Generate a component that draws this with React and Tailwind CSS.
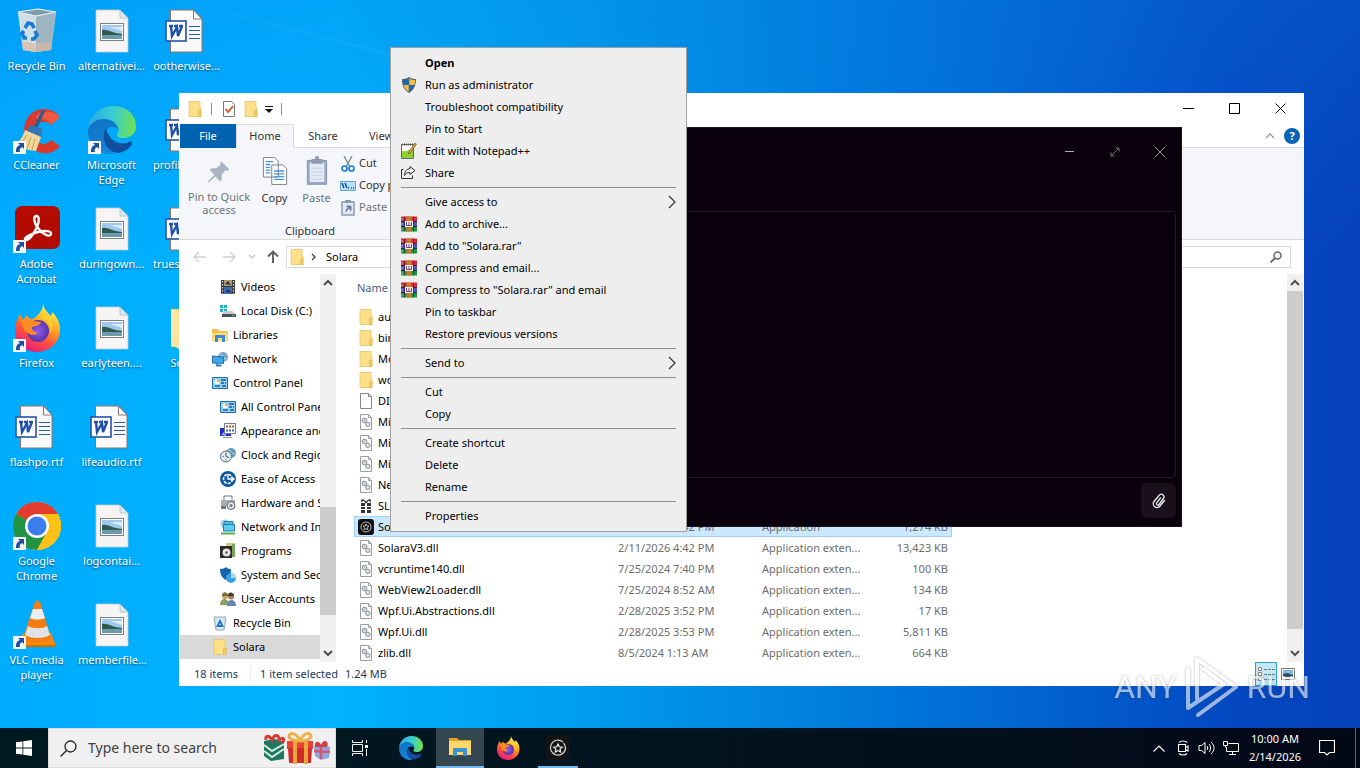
import React, { useState } from 'react';

const ShortcutArrow = () => (
  <g>
    <rect x="0" y="35" width="13" height="13" fill="#f4f6f8" />
    <path d="M3 46c0-4 1-6 4-7l-2-2h6v6l-2-2c-2 1-3 3-2 5z" fill="#1f4e9c" />
  </g>
);

const RecycleBinIcon = () => (
  <svg viewBox="0 0 48 48" className="size-12">
    <path d="M5 5l20-3 18 3-5 38-15 2-13-2z" fill="#c3d5df" />
    <path d="M5 5l18 4v36l-13-2z" fill="#cfdfe8" />
    <path d="M23 9l20-4-5 38-15 2z" fill="#9db4c1" />
    <path d="M5 5l20-3 18 3-20 4z" fill="#7f9aaa" stroke="#edf3f6" strokeWidth="1.2" />
    <path d="M9 34l14 3 16-3-1 9-15 2-13-2z" fill="#dbb9a0" opacity=".7" />
    <g fill="none" stroke="#1879d0" strokeWidth="3.6">
      <path d="M12 21l3-5 4 1 2 4" />
      <path d="M22 24l2 4-3 4h-3" />
      <path d="M14 31h-3l-2-5 2-2" />
    </g>
  </svg>
);

const CCleanerIcon = () => (
  <svg viewBox="0 0 48 48" className="size-12">
    <path d="M47 11l-9 8c-4-5-12-4-15 2-4 7 0 16 7 17 4 0 6-2 8-4l9 6c-6 8-16 9-24 5C12 40 8 24 14 13 20 1 38-1 47 11z" fill="#d9382a" />
    <path d="M47 11c-7-7-18-7-24-1l2 5c6-4 10-1 13 4z" fill="#ef5a41" />
    <path d="M29 4l3 1-8 18-4-1z" fill="#2f5c93" />
    <path d="M17 19l13 4-2 9-15-6z" fill="#3478b8" />
    <path d="M12 24l16 7-5 14-8-1-14-6c7-3 9-8 11-14z" fill="#f2d79a" />
    <path d="M14 29l-7 10m11-8l-4 12m8-10l-3 11" stroke="#c99a51" />
    <ShortcutArrow />
  </svg>
);

const AcrobatIcon = () => (
  <svg viewBox="0 0 48 48" className="size-12">
    <rect x="2" y="1" width="45" height="43" rx="7" fill="#b30b00" />
    <path d="M23 11c3-1 4 5 1 11-3 7-8 13-11 13-4-1 4-6 12-8 7-2 14-1 13 2-1 4-9 0-13-6-4-5-5-11-2-12z" fill="none" stroke="#fff" strokeWidth="2.4" />
    <ShortcutArrow />
  </svg>
);

const FirefoxArt = ({ id }) => (
  <>
    <defs>
      <linearGradient id={`${id}f`} x1=".75" y1=".05" x2=".25" y2="1">
        <stop offset="0" stopColor="#fff44f" />
        <stop offset=".35" stopColor="#ffa520" />
        <stop offset=".65" stopColor="#ff4f3d" />
        <stop offset="1" stopColor="#e31587" />
      </linearGradient>
      <radialGradient id={`${id}p`}>
        <stop offset="0" stopColor="#8a5cf5" />
        <stop offset="1" stopColor="#5b32a5" />
      </radialGradient>
    </defs>
    <path d="M30 0c1 5 4 8 8 12 1-2 1-3 1-4 8 7 10 18 6 27-4 8-12 13-21 13C10 48 1 37 2 25c0-6 3-11 5-15l3 6 4-5c1 2 2 4 6 4 5-4 10-8 10-15z" fill={`url(#${id}f)`} />
    <circle cx="25" cy="27" r="11" fill={`url(#${id}p)`} />
    <path d="M7 16c4-2 8 0 12 1l9 1c-1 4-6 4-9 5-1 3 3 5 6 6-5 4-13 1-15-6-1-3-1-5-3-7z" fill="#ff8b22" />
    <path d="M23 15c10-3 17 6 14 16 5-9 2-18-5-23-1 4-5 6-9 7z" fill="#ffd02f" />
  </>
);

const FirefoxIcon = () => (
  <svg viewBox="0 0 48 48" className="size-12">
    <FirefoxArt id="desk" />
    <ShortcutArrow />
  </svg>
);

const EdgeArt = ({ id }) => (
  <>
    <defs>
      <linearGradient id={`${id}a`} x1="0" y1=".4" x2="1" y2=".5">
        <stop offset="0" stopColor="#2aa9e8" />
        <stop offset=".5" stopColor="#38cdd0" />
        <stop offset="1" stopColor="#71e24e" />
      </linearGradient>
      <linearGradient id={`${id}b`} x1="0" y1="0" x2=".4" y2="1">
        <stop offset="0" stopColor="#0f6fc0" />
        <stop offset="1" stopColor="#1585dc" />
      </linearGradient>
    </defs>
    <path d="M0 24C1 10 11 0 25 0c14 0 23 9 23 20 0 8-6 12-13 12-5 0-7-2-6-4 2-2 2-4 1-7-2-5-8-8-14-8C8 13 3 17 0 24z" fill={`url(#${id}a)`} />
    <path d="M0 24c2-7 8-11 16-11 7 0 13 4 14 10-3-3-8-3-11 0-6 6-4 17 8 25-15 2-28-9-27-24z" fill={`url(#${id}b)`} />
    <path d="M18 22c-6 10 0 24 12 25 7-1 12-5 14-9 1-2-1-3-3-2-6 3-15 1-19-5-2-3-4-6-4-9z" fill="#104f9e" />
  </>
);

const EdgeIcon = () => (
  <svg viewBox="0 0 48 48" className="size-12">
    <EdgeArt id="desk-edge" />
    <ShortcutArrow />
  </svg>
);

const ChromeIcon = () => (
  <svg viewBox="0 0 48 48" className="size-12">
    <circle cx="24" cy="24" r="24" fill="#fbc116" />
    <path d="M24 24L3.200 12A24 24 0 0 1 44.800 12z" fill="#e33b2e" />
    <path d="M3.200 12A24 24 0 0 0 24 48l10-18-10-6z" fill="#229342" />
    <path d="M24 12h21a24 24 0 0 1-21 36l10-18z" fill="#fbc116" />
    <circle cx="24" cy="24" r="12" fill="#fff" />
    <circle cx="24" cy="24" r="9.500" fill="#3b7ded" />
    <ShortcutArrow />
  </svg>
);

const VlcIcon = () => (
  <svg viewBox="0 0 48 48" className="size-12">
    <path d="M10 32h28l5 13H6z" fill="#f58a0b" />
    <path d="M6 44h37v2H6z" fill="#d96a00" />
    <path d="M22 1c1-2 4-2 5 0l11 36c-5 6-23 6-28 0z" fill="#f47d11" />
    <path d="M20 8h9l3 9c-4 2-11 2-15 0z" fill="#eceff1" />
    <path d="M15 25c4 3 15 3 19 0l3 9c-6 4-19 4-25 0z" fill="#dfe3e6" />
    <ShortcutArrow />
  </svg>
);

const WordFileIcon = () => (
  <svg viewBox="0 0 48 48" className="size-12">
    <path d="M7.500 3h23l8.500 9v33H7.500z" fill="#fafafa" stroke="#8c7568" />
    <path d="M30.500 3v9H39z" fill="#fff" stroke="#8c7568" />
    <path d="M26 19.500h11M26 23.500h11M26 27.500h11M26 31.500h11" stroke="#2a5cb0" />
    <rect x="3" y="14" width="20" height="20" fill="#fff" stroke="#2453a6" strokeWidth="1.600" />
    <path d="M6 19h4m1 0h4m1 0h4M8 19l1 10 5-9 1 9 4-10" fill="none" stroke="#1f4fa8" strokeWidth="2.400" />
  </svg>
);

const PictureFileIcon = () => (
  <svg viewBox="0 0 48 48" className="size-12">
    <path d="M8 3h24l8 8v34H8z" fill="#f6f5f3" stroke="#c4c7c9" strokeWidth=".8" />
    <path d="M32 3v8h8z" fill="#d8ebf5" stroke="#b4bcc1" strokeWidth=".8" />
    <rect x="12.500" y="16.500" width="23" height="17" fill="#fff" stroke="#77808a" />
    <path d="M14 18h20v14H14z" fill="#9fc8ee" />
    <path d="M14 23c6-1 9 3 20 4v2H14z" fill="#2f5b4f" />
    <path d="M14 28h20v4H14z" fill="#6d9aad" />
    <path d="M22 20h12v4z" fill="#dcecf8" />
  </svg>
);

const DesktopFolderIcon = () => (
  <svg viewBox="0 0 48 48" className="size-12">
    <path d="M8 5h30v38H8z" fill="#ffd36b" />
    <path d="M8 5l8 3v37l-8-5z" fill="#ffe6a3" />
  </svg>
);

const FolderIcon = () => (
  <svg viewBox="0 0 16 16" className="size-4 shrink-0">
    <path d="M2 .5h11v6.500h1v8.500H2z" fill="#ffe08a" stroke="#e5bd56" strokeWidth=".7" />
    <path d="M11.500 9.500H14v6h-2.500z" fill="#f7cd62" stroke="#dfb044" strokeWidth=".6" />
  </svg>
);

const BlankFileIcon = () => (
  <svg viewBox="0 0 16 16" className="size-4 shrink-0">
    <path d="M2.500.5h8l3 3v12h-11z" fill="#fff" stroke="#84888b" />
    <path d="M10.500.5v3h3" fill="none" stroke="#84888b" />
  </svg>
);

const DllIcon = () => (
  <svg viewBox="0 0 16 16" className="size-4 shrink-0">
    <path d="M2.500.5h8l3 3v12h-11z" fill="#fcfcfc" stroke="#9a9ea1" />
    <path d="M10.500.5v3h3" fill="none" stroke="#9a9ea1" />
    <circle cx="6.500" cy="6.500" r="2.200" fill="#eee" stroke="#9aa0a4" strokeWidth="1.200" />
    <circle cx="6.500" cy="6.500" r=".6" fill="#858a8e" />
    <circle cx="9.800" cy="10.300" r="2" fill="#eee" stroke="#9aa0a4" strokeWidth="1.200" />
  </svg>
);

const GiftIcon = () => (
  <svg viewBox="0 0 16 16" className="size-4 shrink-0">
    <path d="M3 5h4v3H3zM9 5h4v3H9zM3 9h4v2H3zM9 9h4v2H9zM3 12h4v3H3zM9 12h4v3H9z" fill="#333" />
    <path d="M8 5C6 1 3 1 4 4M8 5c2-4 5-4 4-1" fill="none" stroke="#333" strokeWidth="1.500" />
  </svg>
);

const SolaraIcon = () => (
  <svg viewBox="0 0 16 16" className="size-4 shrink-0">
    <rect width="16" height="16" rx="3" fill="#111" />
    <circle cx="8" cy="8" r="5" fill="none" stroke="#b9b9b9" />
    <path d="M8 5l.9 2 2.100.2-1.600 1.400.5 2.100L8 9.700l-1.900 1 .5-2.100L5 7.200 7.100 7z" fill="none" stroke="#ddd" strokeWidth=".8" />
  </svg>
);

const treeArt = {
  videos: (
    <>
      <path d="M1 1h14v14H1z" fill="#333" />
      <path d="M4 1h8v6H4z" fill="#b39a63" />
      <path d="M4 8h8v7H4z" fill="#3d6dbd" />
      <path d="M5 5l3-3 3 4zM5 13l3-3 4 4z" fill="#223a56" />
      <path d="M2.500 2v13M13.500 2v13" stroke="#ddd" strokeWidth="1.300" strokeDasharray="1.500 1.500" />
    </>
  ),
  disk: (
    <>
      <path d="M0 2h3v3H0zM4 2h3v3H4zM0 6h3v3H0zM4 6h3v3H4z" fill="#1bb1d8" />
      <path d="M4 8h9l2 3H2z" fill="#c7ccd0" />
      <path d="M2 11h14v3H2z" fill="#4a5157" />
      <path d="M12 12h2v1h-2z" fill="#4ee04a" />
    </>
  ),
  libraries: (
    <>
      <path d="M0 2h6l1 2h9v10H0z" fill="#f7c14b" />
      <path d="M0 6h16v8H0z" fill="#ffdb70" />
      <path d="M3 8h10v7h-3v-4H6v4H3z" fill="#3b8bd8" />
    </>
  ),
  network: (
    <>
      <circle cx="11" cy="6" r="5" fill="#75a9c9" />
      <path d="M8 3c3 1 2 4 6 5" stroke="#cde4f0" fill="none" />
      <path d="M.5 5l11 1v6.500L.5 12z" fill="#3ba6ea" stroke="#226ca6" />
      <path d="M4 13l6 1-1 1.500H4z" fill="#2f7cb5" />
    </>
  ),
  control: (
    <>
      <path d="M.5 2.500h15v11H.5z" fill="#8fd0f4" stroke="#1e6fa8" />
      <circle cx="5" cy="7" r="2.500" fill="#fff" />
      <path d="M5 7V4.500A2.500 2.500 0 0 1 7.500 7z" fill="#f0a22d" />
      <path d="M9 5h5M9 8h3M13 8h1M3 11h5M10 11h4" stroke="#195d93" strokeWidth="1.300" />
    </>
  ),
  appearance: (
    <>
      <path d="M0 5h11v8H0z" fill="#1b2fce" />
      <path d="M1 12l5-5v6z" fill="#8ab0ff" />
      <path d="M4.500.5h11v10h-11z" fill="#fff" stroke="#6d7c9e" />
      <path d="M6 3.500h2M9 3.500h2M12 3.500h2" stroke="#b55a2c" strokeWidth="2" />
      <path d="M6 7.500h2M9 7.500h2M12 7.500h2" stroke="#4766b4" strokeWidth="2" />
      <path d="M3 14.500h9" stroke="#99a" />
    </>
  ),
  clock: (
    <>
      <circle cx="11" cy="6" r="5" fill="#5f9bc8" />
      <path d="M8 3c4 0 3 4 7 4" fill="none" stroke="#bce0b7" />
      <circle cx="6" cy="9.500" r="5.500" fill="#e1e8ec" stroke="#65747e" />
      <path d="M6 5.500v4l3 1M2.500 9.500h1M6 13.500v-1" fill="none" stroke="#34566f" />
    </>
  ),
  ease: (
    <>
      <circle cx="8" cy="8" r="8" fill="#125a9f" />
      <circle cx="8" cy="8" r="4.500" fill="none" stroke="#fff" strokeWidth="1.600" strokeDasharray="3 1.200" />
      <path d="M8 3v5h6M11 6l3 2-3 2" stroke="#fff" strokeWidth="1.300" fill="none" />
    </>
  ),
  hardware: (
    <>
      <path d="M4 1h8v5H4z" fill="#fff" stroke="#777" />
      <path d="M1 5h14v6H1z" fill="#a7adb1" />
      <path d="M1 11h5v3H1z" fill="#70777c" />
      <circle cx="11" cy="10.500" r="4" fill="#dfe4e7" stroke="#5a646b" />
      <circle cx="11" cy="10.500" r="1.600" fill="#71818c" />
    </>
  ),
  internet: (
    <>
      <circle cx="5" cy="5" r="4.500" fill="#9ed0e5" />
      <path d="M4 2.500h9v6H4z" fill="#52bde9" stroke="#277aa5" />
      <path d="M3.500 5.500h11v6.500h-11z" fill="#5fcdf2" stroke="#277aa5" />
      <path d="M1 14.500h14" stroke="#52b256" strokeWidth="2" />
    </>
  ),
  programs: (
    <>
      <path d="M6 0h9v12H6z" fill="#d5c78f" />
      <path d="M12 1h3v13h-3z" fill="#76a65b" />
      <path d="M0 3h12v12H0z" fill="#2f2a25" />
      <circle cx="6.500" cy="9.500" r="4" fill="#e1e2e5" />
      <circle cx="6.500" cy="9.500" r="1.200" fill="#555" />
    </>
  ),
  system: (
    <>
      <path d="M0 2c3 0 5-1 6-2 2 2 4 2 5 2 0 6-2 9-5 11C2 11 0 7 0 2z" fill="#1565b1" />
      <circle cx="11" cy="11" r="5" fill="#3ba0e6" />
      <path d="M11 11V6a5 5 0 0 1 5 5z" fill="#a1d8fa" />
    </>
  ),
  users: (
    <>
      <circle cx="5" cy="5" r="3" fill="#c99d65" />
      <path d="M2 5c0-5 6-5 6 0z" fill="#7b6a35" />
      <path d="M0 14c0-8 9-8 9 0z" fill="#87a35c" />
      <circle cx="11" cy="5.500" r="3" fill="#a97b56" />
      <path d="M8 5c0-5 6-4 6 0z" fill="#43352d" />
      <path d="M7 15c0-8 9-8 9 0z" fill="#6786b5" />
    </>
  ),
  recycle: (
    <>
      <path d="M2 2h12l-2 13H4z" fill="#d8e6ee" stroke="#8fa9b7" />
      <path d="M5.500 11l2.500-5 2.500 5z" fill="none" stroke="#1f75c9" strokeWidth="1.800" />
    </>
  ),
};

const TreeIcon = ({ name }) => (
  name === 'folder' ? <FolderIcon /> : <svg viewBox="0 0 16 16" className="size-4 shrink-0">{treeArt[name]}</svg>
);

const ShieldIcon = () => (
  <svg viewBox="0 0 16 16" className="size-4">
    <path d="M8 0c2 1.500 5 2 7 2 0 7-2 11-7 14C3 13 1 9 1 2c2 0 5-.5 7-2z" fill="#59656d" />
    <path d="M7.700 1.500V8H2.500C2 6 2 4.500 2 3c2 0 4-.5 5.700-1.500zM8.300 8h5.200c-.7 3-2.500 5-5.200 6.800z" fill="#1869b5" />
    <path d="M8.300 1.500C10 2.500 12 3 14 3c0 2 0 3.500-.4 5H8.300zM2.500 8h5.200v6.800C5 13 3.300 11 2.500 8z" fill="#f7bd4a" />
  </svg>
);

const NotepadIcon = () => (
  <svg viewBox="0 0 16 16" className="size-4">
    <path d="M.5 1.500h12v14H.5z" fill="#fbfbf4" stroke="#667" />
    <path d="M1 8c4 1 7-1 11-3v10H1z" fill="#8ed135" />
    <path d="M1 1.500h12" stroke="#555" strokeWidth="2" strokeDasharray="1 1" />
    <path d="M14 0l1.500 1L9.500 10l-2 1 .5-2.500z" fill="#eda83c" stroke="#543b23" strokeWidth=".6" />
  </svg>
);

const ShareIcon = () => (
  <svg viewBox="0 0 16 16" className="size-4">
    <path d="M2.500 4.500h-2v9h11v-3M9 1.500l5 4-5 4v-2c-3 0-4.500 1-5.500 3 0-4 2-6.500 5.500-7z" fill="none" stroke="#333" />
  </svg>
);

const RarIcon = () => (
  <svg viewBox="0 0 16 16" className="size-4">
    <path d="M0 .5h16v5H0z" fill="#d8283f" />
    <path d="M0 5.500h16v5H0z" fill="#4a55c4" />
    <path d="M0 10.500h16v5H0z" fill="#1f9440" />
    <path d="M0 5.500h16M0 10.500h16" stroke="#30233a" />
    <path d="M5.500.5h5v15h-5z" fill="#c87a2a" />
    <path d="M3.500.5v15M12.500.5v15" stroke="#30233a" strokeWidth=".6" />
    <path d="M4 5h8v6H4z" fill="#f8efe0" />
    <path d="M5.500 6v3.500h5V6M8 6v3" fill="none" stroke="#6b4590" />
    <path d="M1 2v2.500M1 7v2.500M1 12v2.500" stroke="#fff" strokeWidth=".8" opacity=".6" />
  </svg>
);

const desktopColumns = [
  [
    { label: 'Recycle Bin', Icon: RecycleBinIcon },
    { label: 'CCleaner', Icon: CCleanerIcon },
    { label: 'Adobe Acrobat', Icon: AcrobatIcon },
    { label: 'Firefox', Icon: FirefoxIcon },
    { label: 'flashpo.rtf', Icon: WordFileIcon },
    { label: 'Google Chrome', Icon: ChromeIcon },
    { label: 'VLC media player', Icon: VlcIcon },
  ],
  [
    { label: 'alternativei...', Icon: PictureFileIcon },
    { label: 'Microsoft Edge', Icon: EdgeIcon },
    { label: 'duringown...', Icon: PictureFileIcon },
    { label: 'earlyteen....', Icon: PictureFileIcon },
    { label: 'lifeaudio.rtf', Icon: WordFileIcon },
    { label: 'logcontai...', Icon: PictureFileIcon },
    { label: 'memberfile...', Icon: PictureFileIcon },
  ],
  [
    { label: 'ootherwise...', Icon: WordFileIcon },
    { label: 'profileshow...', Icon: WordFileIcon },
    { label: 'trueshando...', Icon: WordFileIcon },
    { label: 'Solara', Icon: DesktopFolderIcon },
  ],
];

const treeItems = [
  { label: 'Videos', icon: 'videos', nested: true },
  { label: 'Local Disk (C:)', icon: 'disk', nested: true },
  { label: 'Libraries', icon: 'libraries' },
  { label: 'Network', icon: 'network' },
  { label: 'Control Panel', icon: 'control' },
  { label: 'All Control Panel Items', icon: 'control', nested: true },
  { label: 'Appearance and Personalization', icon: 'appearance', nested: true },
  { label: 'Clock and Region', icon: 'clock', nested: true },
  { label: 'Ease of Access', icon: 'ease', nested: true },
  { label: 'Hardware and Sound', icon: 'hardware', nested: true },
  { label: 'Network and Internet', icon: 'internet', nested: true },
  { label: 'Programs', icon: 'programs', nested: true },
  { label: 'System and Security', icon: 'system', nested: true },
  { label: 'User Accounts', icon: 'users', nested: true },
  { label: 'Recycle Bin', icon: 'recycle' },
  { label: 'Solara', icon: 'folder' },
];

const files = [
  { name: 'autoexec', Icon: FolderIcon },
  { name: 'bin', Icon: FolderIcon },
  { name: 'Monaco', Icon: FolderIcon },
  { name: 'workspace', Icon: FolderIcon },
  { name: 'DISCORD', Icon: BlankFileIcon },
  { name: 'Microsoft.Core.dll', Icon: DllIcon },
  { name: 'Microsoft.WinForms.dll', Icon: DllIcon },
  { name: 'Microsoft.Wpf.dll', Icon: DllIcon },
  { name: 'Newtonsoft.Json.dll', Icon: DllIcon },
  { name: 'SLN.exe', Icon: GiftIcon },
  { name: 'Solara.exe', Icon: SolaraIcon, date: '2/11/2026 4:42 PM', type: 'Application', size: '1,274 KB' },
  { name: 'SolaraV3.dll', Icon: DllIcon, date: '2/11/2026 4:42 PM', type: 'Application exten...', size: '13,423 KB' },
  { name: 'vcruntime140.dll', Icon: DllIcon, date: '7/25/2024 7:40 PM', type: 'Application exten...', size: '100 KB' },
  { name: 'WebView2Loader.dll', Icon: DllIcon, date: '7/25/2024 8:52 AM', type: 'Application exten...', size: '134 KB' },
  { name: 'Wpf.Ui.Abstractions.dll', Icon: DllIcon, date: '2/28/2025 3:52 PM', type: 'Application exten...', size: '17 KB' },
  { name: 'Wpf.Ui.dll', Icon: DllIcon, date: '2/28/2025 3:53 PM', type: 'Application exten...', size: '5,811 KB' },
  { name: 'zlib.dll', Icon: DllIcon, date: '8/5/2024 1:13 AM', type: 'Application exten...', size: '664 KB' },
];

const menuGroups = [
  [
    { label: 'Open', bold: true },
    { label: 'Run as administrator', Icon: ShieldIcon },
    { label: 'Troubleshoot compatibility' },
    { label: 'Pin to Start' },
    { label: 'Edit with Notepad++', Icon: NotepadIcon },
    { label: 'Share', Icon: ShareIcon },
  ],
  [
    { label: 'Give access to', submenu: true },
    { label: 'Add to archive...', Icon: RarIcon },
    { label: 'Add to "Solara.rar"', Icon: RarIcon },
    { label: 'Compress and email...', Icon: RarIcon },
    { label: 'Compress to "Solara.rar" and email', Icon: RarIcon },
    { label: 'Pin to taskbar' },
    { label: 'Restore previous versions' },
  ],
  [{ label: 'Send to', submenu: true }],
  [{ label: 'Cut' }, { label: 'Copy' }],
  [{ label: 'Create shortcut' }, { label: 'Delete' }, { label: 'Rename' }],
  [{ label: 'Properties' }],
];

const Wallpaper = () => (
  <svg className="absolute inset-0 h-full w-full" viewBox="0 0 1360 768" preserveAspectRatio="none" aria-hidden="true">
    <defs>
      <linearGradient id="sky" x1="0" y1="0" x2="1" y2="0">
        <stop offset="0" stopColor="#00adff" />
        <stop offset=".25" stopColor="#00b2ff" />
        <stop offset=".42" stopColor="#009eee" />
        <stop offset=".7" stopColor="#006fd6" />
        <stop offset=".9" stopColor="#0449c2" />
        <stop offset="1" stopColor="#0540b8" />
      </linearGradient>
      <linearGradient id="shade" x1="0" y1="0" x2="0" y2="1">
        <stop offset="0" stopColor="#0a7be4" stopOpacity=".25" />
        <stop offset=".35" stopColor="#0a7be4" stopOpacity="0" />
      </linearGradient>
    </defs>
    <rect width="1360" height="768" fill="url(#sky)" />
    <rect width="1360" height="768" fill="url(#shade)" />
    <path d="M180 0L420 60V64L190 4z" fill="#35b4ff" opacity=".2" />
  </svg>
);

const DesktopIcons = () => (
  <div className="relative -ml-px flex pt-[7px]">
    {desktopColumns.map((column, i) => (
      <div key={i} className="flex w-[75px] flex-col">
        {column.map(({ label, Icon }) => (
          <button key={label} className="flex h-[99px] flex-col items-center gap-[3px]">
            <Icon />
            <span className="w-[75px] px-1 leading-[15px] text-white [text-shadow:0_1px_2px_rgba(0,0,0,0.6)]">{label}</span>
          </button>
        ))}
      </div>
    ))}
  </div>
);

const TitleBar = () => (
  <div className="flex h-[31px] items-center pr-px pl-2">
    <div className="flex flex-1 items-center">
      <FolderIcon />
      <span className="ml-2 h-3 w-px bg-[#8a8a8a]" />
      <button aria-label="Properties" className="ml-[9px]">
        <svg viewBox="0 0 16 16" className="size-4">
          <path d="M2.500.5h8l3 3v12h-11z" fill="#fff" stroke="#777" />
          <path d="M4.500 8l2.500 3 5-6" fill="none" stroke="#dc5429" strokeWidth="1.800" />
        </svg>
      </button>
      <button aria-label="New folder" className="ml-[6px]"><FolderIcon /></button>
      <button aria-label="Customize toolbar" className="ml-[6px]">
        <svg viewBox="0 0 8 8" className="size-2">
          <path d="M0 1.500h8" stroke="#111" />
          <path d="M0 4h8L4 8z" fill="#111" />
        </svg>
      </button>
      <span className="ml-2 h-3 w-px bg-[#8a8a8a]" />
    </div>
    <button aria-label="Minimize" className="flex w-[46px] justify-center">
      <svg viewBox="0 0 11 11" className="size-[11px]"><path d="M0 5.500h11" stroke="#000" /></svg>
    </button>
    <button aria-label="Maximize" className="flex w-[46px] justify-center">
      <svg viewBox="0 0 11 11" className="size-[11px]"><path d="M.5.5h10v10H.5z" fill="none" stroke="#000" /></svg>
    </button>
    <button aria-label="Close" className="flex w-[46px] justify-center">
      <svg viewBox="0 0 11 11" className="size-[11px]"><path d="M.5.5l10 10M10.500.5l-10 10" stroke="#000" /></svg>
    </button>
  </div>
);

const RibbonTabs = () => (
  <div className="flex h-6 pl-px text-[#333]">
    <button className="w-14 bg-[#0063b1] text-white">File</button>
    <button className="w-[58px] border border-b-0 border-[#dadbdc] bg-[#f4f6f9] pb-px">Home</button>
    <div className="flex flex-1 border-b border-[#dadbdc]">
      <button className="w-[58px]">Share</button>
      <button className="w-[58px]">View</button>
      <div className="ml-auto flex items-center gap-[9px] pr-1">
        <button aria-label="Minimize the ribbon">
          <svg viewBox="0 0 10 6" className="h-[6px] w-[10px]"><path d="M1 5l4-4 4 4" fill="none" stroke="#999" strokeWidth="1.300" /></svg>
        </button>
        <button aria-label="Help" className="size-4 rounded-full bg-[#0a63b8] leading-4 font-bold text-white">?</button>
      </div>
    </div>
  </div>
);

const Ribbon = () => (
  <div className="flex h-[92px] flex-col border-b border-[#dadbdc] bg-[#f4f6f9] pl-1 text-[#333]">
    <div className="flex h-[75px] w-[252px] pt-2">
      <button className="flex w-[72px] shrink-0 flex-col items-center gap-[6px] text-[#6f7477]">
        <svg viewBox="0 0 26 26" className="mt-[4px] size-6">
          <path d="M16 2l8 8-2 2-2-1-4 5v5l-2 2-5-5-7 6-1-1 7-7-5-5 2-2h5l5-4-1-2z" fill="#a8b5c3" />
        </svg>
        <span className="leading-[13px] whitespace-nowrap">Pin to Quick<br />access</span>
      </button>
      <button className="flex w-[39px] shrink-0 flex-col items-center gap-[3px]">
        <svg viewBox="0 0 28 32" className="h-[30px] w-[26px]">
          <path d="M1.500 1.500h12l4 4v17h-16zM10.500 9.500h12l4 4v17h-16z" fill="#fff" stroke="#737b83" />
          <path d="M4 6h8M4 9h5M4 12h5M4 15h5M4 18h5M13 16h11M13 19h11M13 22h11M13 25h11" stroke="#4d93d9" strokeWidth="1.400" />
        </svg>
        <span>Copy</span>
      </button>
      <button className="flex w-[45px] shrink-0 flex-col items-center gap-[3px] text-[#6f7477]">
        <svg viewBox="0 0 24 32" className="h-[30px] w-[22px]">
          <path d="M1.500 4.500h21v26h-21z" fill="#99a9bf" stroke="#8090a8" />
          <path d="M4 7h16v21H4z" fill="#e2e9f4" />
          <path d="M6 3h4V0h4v3h4v5H6z" fill="#8b9aaf" />
          <path d="M6 13h12M6 17h12M6 21h12M6 25h12" stroke="#c5d0e1" />
        </svg>
        <span>Paste</span>
      </button>
      <div className="flex flex-1 flex-col pl-px whitespace-nowrap">
        <button className="flex h-[22px] items-start gap-[3px] leading-[14px]">
          <svg viewBox="0 0 16 16" className="size-4">
            <path d="M4 0l6 11M12 0L6 11" stroke="#7b858e" strokeWidth="1.300" />
            <circle cx="4.500" cy="12.500" r="2.500" fill="none" stroke="#1c7dcc" strokeWidth="1.700" />
            <circle cx="11.500" cy="12.500" r="2.500" fill="none" stroke="#1c7dcc" strokeWidth="1.700" />
          </svg>
          Cut
        </button>
        <button className="flex h-[22px] items-start gap-[3px] leading-[14px]">
          <svg viewBox="0 0 16 16" className="size-4">
            <path d="M.5 3.500h15v9H.5z" fill="#b9dffa" stroke="#63a4d5" />
            <path d="M2 5l2 5M5 5l2 5M8 10h1M11 10h1M13 10h1" stroke="#114d83" strokeWidth="1.400" />
          </svg>
          Copy path
        </button>
        <button className="flex h-[22px] items-start gap-[3px] leading-[14px] text-[#6f7477]">
          <svg viewBox="0 0 16 16" className="size-4">
            <path d="M2 2h12v13H2z" fill="#e4e9f2" stroke="#8a9bb4" strokeWidth="1.500" />
            <path d="M5 0h6v3H5z" fill="#8a9bb4" />
            <path d="M6 12c0-3 1-4 3-4M6.500 6H11v4.500z" fill="#6b7fa1" stroke="#6b7fa1" />
          </svg>
          Paste shortcut
        </button>
      </div>
    </div>
    <div className="w-[254px] text-center leading-4">Clipboard</div>
  </div>
);

const AddressRow = () => (
  <div className="flex h-[34px] items-center pr-[13px] pl-[14px]">
    <button aria-label="Back">
      <svg viewBox="0 0 14 12" className="h-3 w-[14px]"><path d="M13 6H1M6 1L1 6l5 5" fill="none" stroke="#cfcfcf" strokeWidth="1.400" /></svg>
    </button>
    <button aria-label="Forward" className="ml-[15px]">
      <svg viewBox="0 0 14 12" className="h-3 w-[14px]"><path d="M1 6h12M8 1l5 5-5 5" fill="none" stroke="#cfcfcf" strokeWidth="1.400" /></svg>
    </button>
    <button aria-label="Recent locations" className="ml-3">
      <svg viewBox="0 0 8 6" className="h-[6px] w-2"><path d="M1 1l3 3 3-3" fill="none" stroke="#c4c4c4" strokeWidth="1.300" /></svg>
    </button>
    <button aria-label="Up" className="ml-[10px]">
      <svg viewBox="0 0 14 14" className="size-[14px]"><path d="M7 13V1.500M2 6.500l5-5 5 5" fill="none" stroke="#5c5c5c" strokeWidth="1.900" /></svg>
    </button>
    <div className="ml-[6px] flex h-[22px] flex-1 items-center border border-[#d9d9d9] pl-[2px]">
      <FolderIcon />
      <svg viewBox="0 0 6 8" className="ml-[6px] h-2 w-[6px]"><path d="M1 1l3 3-3 3" fill="none" stroke="#444" strokeWidth="1.300" /></svg>
      <button className="ml-[9px]">Solara</button>
    </div>
    <label className="ml-3 flex h-[22px] w-[220px] items-center border border-[#d9d9d9] pr-2 pl-2">
      <input aria-label="Search Solara" className="w-full min-w-0 flex-1 outline-none" />
      <svg viewBox="0 0 12 12" className="size-3 shrink-0">
        <circle cx="7.500" cy="4.500" r="3.500" fill="none" stroke="#666" strokeWidth="1.500" />
        <path d="M5 7L.5 11.500" stroke="#666" strokeWidth="1.800" />
      </svg>
    </label>
  </div>
);

const Chevron = ({ up }) => (
  <svg viewBox="0 0 10 8" className="h-2 w-[10px]">
    <path d={up ? 'M1 6l4-4 4 4' : 'M1 2l4 4 4-4'} fill="none" stroke="#505050" strokeWidth="2" />
  </svg>
);

const FileTable = ({ selected, onSelect }) => (
  <table className="w-[598px] table-fixed text-left leading-4 whitespace-nowrap text-[#6d6d6d]">
    <thead>
      <tr className="h-8 text-[#4c607a]">
        <th className="w-[264px] pb-1 pl-[3px] font-normal">Name</th>
        <th className="w-36 pb-1 font-normal">Date modified</th>
        <th className="w-[110px] pb-1 font-normal">Type</th>
        <th className="pr-1 pb-1 text-right font-normal">Size</th>
      </tr>
    </thead>
    <tbody>
      {files.map(({ name, Icon, date, type, size }) => (
        <tr
          key={name}
          onClick={() => onSelect(name)}
          className={name === selected ? 'h-[21px] bg-[#cce8ff] outline outline-offset-[-1px] outline-[#99d1ff]' : 'h-[21px]'}
        >
          <td className="text-black">
            <div className="flex items-center gap-1 pl-1"><Icon />{name}</div>
          </td>
          <td>{date}</td>
          <td>{type}</td>
          <td className="pr-1 text-right">{size}</td>
        </tr>
      ))}
    </tbody>
  </table>
);

const Explorer = () => {
  const [selected, setSelected] = useState('Solara.exe');
  const [folder, setFolder] = useState(treeItems.length - 1);

  return (
    <section className="absolute top-[93px] right-14 bottom-[42px] left-[179px] flex flex-col bg-white text-black">
      <TitleBar />
      <RibbonTabs />
      <Ribbon />
      <AddressRow />
      <div className="flex min-h-0 flex-1">
        <nav className="w-[141px] overflow-hidden pt-px pl-px">
          {treeItems.map((item, i) => (
            <button
              key={item.label + i}
              onClick={() => setFolder(i)}
              className={`flex h-6 w-full items-center gap-[5px] whitespace-nowrap ${item.nested ? 'pl-10' : 'pl-8'} ${i === folder ? 'bg-[#d9d9d9]' : ''}`}
            >
              <TreeIcon name={item.icon} />
              {item.label}
            </button>
          ))}
        </nav>
        <div className="flex w-4 flex-col items-center bg-[#f0f0f0] py-[5px]">
          <Chevron up />
          <div className="mt-auto mb-[34px] h-[108px] w-4 bg-[#cdcdcd]" />
          <Chevron />
        </div>
        <div className="flex-1 overflow-hidden pl-[18px]">
          <FileTable selected={selected} onSelect={setSelected} />
        </div>
        <div className="mr-px flex w-4 flex-col items-center bg-[#f0f0f0] py-[5px]">
          <Chevron up />
          <div className="mt-1 mb-5 w-4 flex-1 bg-[#cdcdcd]" />
          <Chevron />
        </div>
      </div>
      <footer className="flex h-6 items-center pl-[15px] text-[#1e395b]">
        <span>18 items</span>
        <span className="mr-[9px] ml-3 h-4 w-px bg-[#eee]" />
        <span>1 item selected</span>
        <span className="ml-[7px]">1.24 MB</span>
        <div className="ml-auto flex items-center gap-1 pr-[9px]">
          <button aria-label="Details view" className="border border-[#2f9fc4] bg-[#c2e7f5] px-px py-[2px]">
            <svg viewBox="0 0 18 18" className="size-[18px]">
              <path d="M1.500 2.500h3v3h-3zM1.500 7.500h3v3h-3zM1.500 12.500h3v3h-3z" fill="#fff" stroke="#a37b70" />
              <path d="M7 4.500h3m1 0h3m1 0h3M7 9.500h3m1 0h3m1 0h3M7 14.500h3m1 0h3m1 0h3" stroke="#637a8c" />
            </svg>
          </button>
          <button aria-label="Large icons view">
            <svg viewBox="0 0 14 12" className="h-3 w-[14px]">
              <path d="M.5.5h13v11H.5z" fill="#fff" stroke="#777" />
              <path d="M2 2h10v6H2z" fill="#7db5df" />
              <path d="M2 6l4-1 6 2v2H2z" fill="#294e68" />
            </svg>
          </button>
        </div>
      </footer>
    </section>
  );
};

const SolaraWindow = () => (
  <section className="absolute top-[127px] right-[178px] bottom-[201px] left-[480px] flex flex-col border border-[#1c141e] bg-[#0a000d] px-[5px] text-[#b5b0b8]">
    <header className="flex h-[83px] justify-end pt-4">
      <button aria-label="Minimize" className="flex h-4 w-[45px] items-center justify-center">
        <svg viewBox="0 0 10 10" className="size-[10px]"><path d="M0 4.500h9" stroke="currentColor" /></svg>
      </button>
      <button aria-label="Maximize" className="flex h-4 w-[45px] items-center justify-center">
        <svg viewBox="0 0 10 10" className="size-[10px]"><path d="M1 9l8-8M5.500 1H9v3.500M1 5.500V9h3.500" fill="none" stroke="#77717a" /></svg>
      </button>
      <button aria-label="Close" className="-mr-[6px] flex h-4 w-[45px] items-center justify-center">
        <svg viewBox="0 0 10 10" className="size-[10px]"><path d="M0 0l10 10M10 0L0 10" stroke="currentColor" strokeWidth=".9" /></svg>
      </button>
    </header>
    <div className="flex-1 rounded-sm border border-[#241b27]" />
    <div className="flex h-12 items-start justify-end pt-[5px]">
      <button aria-label="Attach" className="flex size-[35px] items-center justify-center rounded-md bg-[#19101c]">
        <svg viewBox="0 0 16 16" className="size-4">
          <path d="M13.500 7.500l-4.500 5.500a3.600 3.600 0 0 1-6-4.500l5-6a2.500 2.500 0 0 1 4.500 3L8 11.500a1.400 1.400 0 0 1-2.200-1.800L9.500 5" fill="none" stroke="#eee" strokeWidth="1.300" strokeLinecap="round" />
        </svg>
      </button>
    </div>
  </section>
);

const ContextMenu = () => (
  <div role="menu" className="absolute top-[47px] left-[390px] w-[297px] border border-[#a0a0a0] bg-[#eeeeee] py-1 text-black">
    {menuGroups.map((group, i) => (
      <div key={i}>
        {i > 0 && <hr className="mx-[10px] my-[3px] border-[#919191]" />}
        {group.map(({ label, Icon, bold, submenu }) => (
          <button key={label} role="menuitem" className="flex h-[22px] w-full items-center pr-[10px] pl-[10px] hover:bg-white">
            <span className="mr-2 w-4">{Icon && <Icon />}</span>
            <span className={bold ? 'font-bold' : ''}>{label}</span>
            {submenu && (
              <svg viewBox="0 0 8 14" className="ml-auto h-[14px] w-2"><path d="M1 1l6 6-6 6" fill="none" stroke="#333" strokeWidth="1.200" /></svg>
            )}
          </button>
        ))}
      </div>
    ))}
  </div>
);

const Watermark = () => (
  <div className="absolute right-[50px] bottom-[9px] flex items-center gap-2 font-['Roboto',sans-serif] text-[32px] leading-[64px] text-white opacity-60 [text-shadow:0_0_3px_rgba(60,60,60,0.7)]">
    <span>ANY</span>
    <svg viewBox="0 0 54 64" className="h-16 w-[54px] drop-shadow-[0_0_1px_rgba(60,60,60,0.7)]" fill="none" stroke="#fff" strokeWidth="4" strokeLinejoin="round" strokeLinecap="round">
      <path d="M12 44V4l39 28-38 28" />
      <path d="M3 14v39l36-24" />
      <path d="M19 14l20 15" />
    </svg>
    <span>RUN</span>
  </div>
);

const GiftsArt = () => (
  <svg viewBox="0 0 68 32" className="h-8 w-[68px] shrink-0">
    <path d="M1 9l11-2 9 3v17l-13 2-7-5z" fill="#1d7761" />
    <path d="M1 13l8 6 12-7M1 19l8 6 12-8" fill="none" stroke="#d7f2dc" strokeWidth="2" />
    <path d="M3 8c-1-5 3-5 6 0 3-7 7-5 7 0 5-4 6 0 3 3" fill="none" stroke="#d63b36" strokeWidth="3" />
    <path d="M24 9h26v8H24z" fill="#e94135" />
    <path d="M25 16h24l-1 15H26z" fill="#ce2b2a" />
    <path d="M30 9h4v23h-4zM41 9h4v23h-4z" fill="#e8a63c" />
    <path d="M37 9c-4-9-10-9-11-5 0 3 5 5 11 5 4-9 10-9 11-5 0 3-5 5-11 5z" fill="none" stroke="#eeb14a" strokeWidth="3" />
    <path d="M51 14l7-2 9 3-1 11-8 2-6-4z" fill="#8ba7db" />
    <path d="M58 13v14M51 19l16 1" stroke="#d85673" strokeWidth="2.500" />
    <path d="M52 15c-1-6 4-7 6-2 2-7 9-4 6 2z" fill="#d43c48" />
  </svg>
);

const ExplorerArt = () => (
  <svg viewBox="0 0 22 20" className="h-5 w-[22px]">
    <path d="M0 1h8l2 2h12v4H0z" fill="#e8a21d" />
    <path d="M0 4h22v14H0z" fill="#ffd76a" />
    <path d="M4 11h14v8h-4v-4H8v4H4z" fill="#3a92cf" />
  </svg>
);

const Taskbar = () => (
  <footer className="relative flex h-10 bg-linear-to-r from-[#001a22] via-[#02141f] to-[#030817] text-white">
    <button aria-label="Start" className="flex w-12 items-center justify-center">
      <svg viewBox="0 0 16 16" className="size-4"><path d="M0 2.300l6.500-.9v6.200H0zM7.300 1.300L16 0v7.600H7.300zM0 8.400h6.500v6.200L0 13.700zM7.300 8.400H16V16l-8.700-1.300z" fill="#fff" /></svg>
    </button>
    <label className="flex w-72 items-center border border-[#dcdcdc] bg-[#f0f0f0] pr-1 pl-[11px]">
      <svg viewBox="0 0 17 17" className="size-[17px] shrink-0">
        <circle cx="10.500" cy="6.500" r="5.500" fill="none" stroke="#222" strokeWidth="1.300" />
        <path d="M6.500 10.500L.5 16.500" stroke="#222" strokeWidth="1.300" />
      </svg>
      <input aria-label="Search" placeholder="Type here to search" className="ml-[11px] w-full min-w-0 flex-1 text-[14px] text-black outline-none placeholder:text-[#3f3f3f]" />
      <GiftsArt />
    </label>
    <button aria-label="Task view" className="flex w-12 items-center justify-center">
      <svg viewBox="0 0 18 16" className="h-4 w-[18px]">
        <path d="M1.500 0v2.500h10V0M1.500 16v-2.500h10V16M1.500 4.500v7h10v-7zM15.500 0v3M15.500 9v7" fill="none" stroke="#f0f0f0" />
        <path d="M14 5h3v3h-3z" fill="#f0f0f0" />
      </svg>
    </button>
    <button aria-label="Microsoft Edge" className="ml-[3px] flex w-12 items-center justify-center">
      <svg viewBox="0 0 48 48" className="size-6"><EdgeArt id="bar-edge" /></svg>
    </button>
    <button aria-label="File Explorer" className="ml-px flex w-12 items-center justify-center border-b-2 border-[#76b9ed] bg-[#34464f]">
      <ExplorerArt />
    </button>
    <button aria-label="Firefox" className="flex w-12 items-center justify-center">
      <svg viewBox="0 0 48 48" className="size-6"><FirefoxArt id="bar" /></svg>
    </button>
    <button aria-label="Solara" className="ml-[6px] flex w-10 items-center justify-center border-b-2 border-[#76b9ed]">
      <svg viewBox="0 0 24 24" className="mt-[2px] size-6">
        <rect width="24" height="24" rx="3" fill="#141416" />
        <path d="M17 6a7.500 7.500 0 1 0 2.500 5M19.500 13a7.500 7.500 0 0 0-2-6" fill="none" stroke="#d5d5d5" strokeWidth="1.200" />
        <path d="M12 8l1.300 2.800 3 .3-2.300 2 .7 3-2.700-1.500-2.700 1.500.7-3-2.300-2 3-.3z" fill="none" stroke="#eee" strokeWidth="1.200" />
      </svg>
    </button>
    <div className="ml-auto flex items-center">
      <button aria-label="Show hidden icons" className="mr-[10px]">
        <svg viewBox="0 0 12 7" className="h-[7px] w-3"><path d="M.5 6.500L6 1l5.500 5.500" fill="none" stroke="#fff" strokeWidth="1.200" /></svg>
      </button>
      <button aria-label="Meet Now" className="mr-[7px]">
        <svg viewBox="0 0 16 16" className="size-4"><path d="M3.500 4.500h7v7h-7zM10.500 7.500l2.500-1.500v5l-2.500-1.500M4 2.500c2-2 6-2 8 0M4 13.500c2 2 6 2 8 0" fill="none" stroke="#fff" strokeWidth="1.100" /></svg>
      </button>
      <button aria-label="Volume" className="mr-2">
        <svg viewBox="0 0 17 16" className="h-4 w-[17px]"><path d="M1 5.500h2.500l3.500-3v11l-3.500-3H1zM9 6c1 1 1 3 0 4M11 4c2 2 2 6 0 8M13 2c4 4 4 8 0 12" fill="none" stroke="#fff" /></svg>
      </button>
      <button aria-label="Network" className="mr-[6px]">
        <svg viewBox="0 0 16 16" className="size-4"><path d="M5.500 3.500h10v8H3.500V7M.5 1.500h4v4h-4zM9.500 11.500v3M6 14.500h7M2.500 5.500v2" fill="none" stroke="#fff" /></svg>
      </button>
      <button className="w-[60px] text-center leading-[18px] whitespace-nowrap">
        10:00 AM<br />2/14/2026
      </button>
      <button aria-label="Notifications" className="mr-[6px] flex w-11 justify-center">
        <svg viewBox="0 0 16 16" className="size-4"><path d="M.5.5h15v12h-5L8 15l-2.500-2.500h-5z" fill="none" stroke="#fff" strokeWidth="1.200" /></svg>
      </button>
      <span className="mr-1 h-10 w-px bg-[#5b636b]" />
    </div>
  </footer>
);

const App = () => {
  return (
    <div className="relative flex h-screen flex-col overflow-hidden bg-[#00a8ff] font-['Noto_Sans','Open_Sans',sans-serif] text-[11px] leading-[18px]">
      <Wallpaper />
      <main className="relative min-h-0 flex-1">
        <DesktopIcons />
        <Explorer />
        <SolaraWindow />
        <ContextMenu />
        <Watermark />
      </main>
      <Taskbar />
    </div>
  );
};

export default App;
